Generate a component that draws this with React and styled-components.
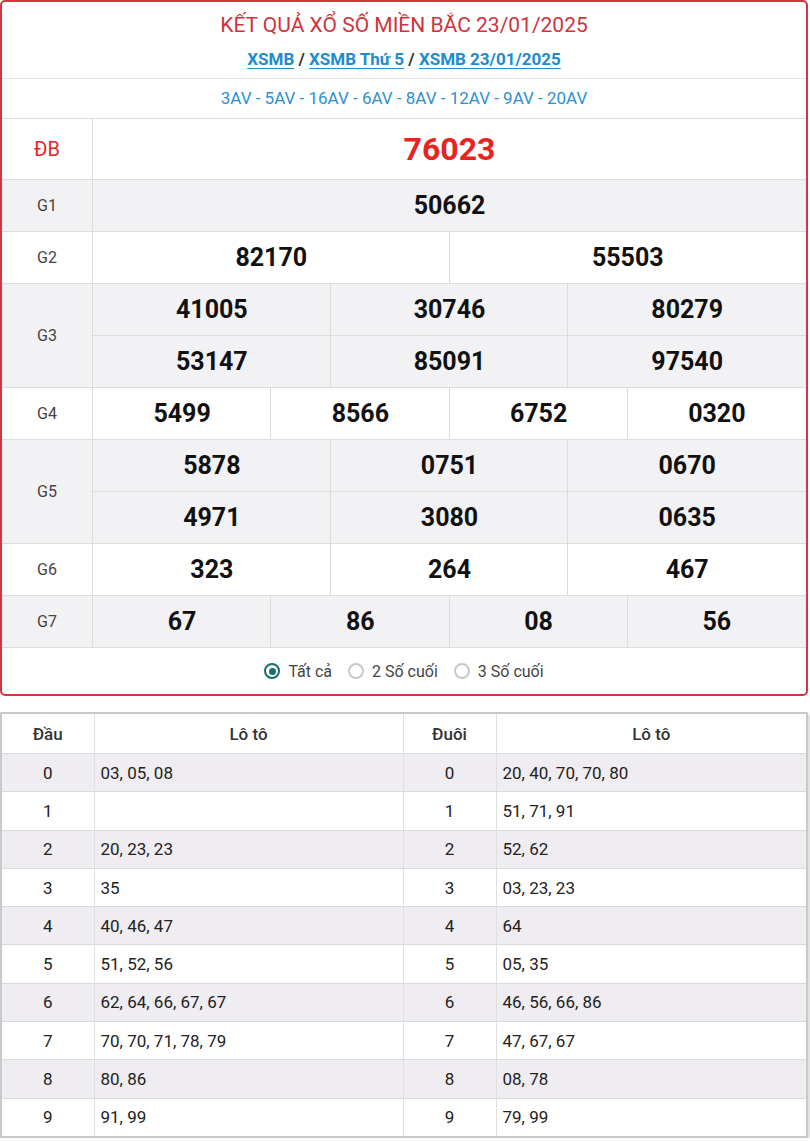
import React from "react";
import styled, { createGlobalStyle } from "styled-components";

const GlobalStyle = createGlobalStyle`
  body {
    margin: 0;
    background: #ffffff;
    font-family: Roboto, "Liberation Sans", sans-serif;
  }
`;

const Page = styled.div`
  width: 808px;
`;

const Card = styled.div`
  border: 2px solid #d7353d;
  border-radius: 5px;
  overflow: hidden;
  background: #fff;
`;

const Title = styled.h1`
  margin: 0;
  padding: 11px 0 12px;
  text-align: center;
  font-weight: 400;
  font-size: 21px;
  color: #d2323c;
`;

const Links = styled.div`
  text-align: center;
  font-size: 17px;
  font-weight: 700;
  color: #333;
  padding-bottom: 9px;
  border-bottom: 1px solid #e2e2e2;

  a {
    color: #1c8bd0;
    text-decoration: underline;
    text-underline-offset: 3px;
  }
`;

const Codes = styled.div`
  text-align: center;
  font-size: 17px;
  color: #2f8fcf;
  line-height: 39px;
  border-bottom: 1px solid #dcdcdc;
`;

const Row = styled.div`
  display: flex;
  background: ${(p) => (p.$shade ? "#f2f1f4" : "#fff")};
  border-bottom: 1px solid #dcdcdc;
`;

const Label = styled.div`
  width: 90px;
  flex: none;
  display: flex;
  align-items: center;
  justify-content: center;
  border-right: 1px solid #dcdcdc;
  font-size: ${(p) => (p.$special ? "20px" : "16px")};
  color: ${(p) => (p.$special ? "#e0282a" : "#444")};
`;

const Values = styled.div`
  flex: 1;
  display: grid;
  grid-template-columns: repeat(${(p) => p.$cols}, 1fr);
`;

const Num = styled.div`
  height: ${(p) => (p.$special ? "60px" : "51px")};
  display: flex;
  align-items: center;
  justify-content: center;
  font-weight: 700;
  font-size: ${(p) => (p.$special ? "32px" : "25px")};
  color: ${(p) => (p.$special ? "#e8241f" : "#111")};
  border-left: 1px solid #dcdcdc;
  border-top: ${(p) => (p.$top ? "1px solid #dcdcdc" : "none")};
  margin-left: -1px;
`;

const Filter = styled.div`
  display: flex;
  justify-content: center;
  align-items: center;
  gap: 16px;
  height: 46px;
  font-size: 16px;
  color: #444;
`;

const Option = styled.label`
  display: flex;
  align-items: center;
  gap: 8px;
`;

const Dot = styled.span`
  width: 16px;
  height: 16px;
  border-radius: 50%;
  box-sizing: border-box;
  border: 2px solid ${(p) => (p.$on ? "#13706d" : "#c8c8c8")};
  display: flex;
  align-items: center;
  justify-content: center;

  &::after {
    content: "";
    width: 7px;
    height: 7px;
    border-radius: 50%;
    background: ${(p) => (p.$on ? "#13706d" : "transparent")};
  }
`;

const LotoTable = styled.table`
  margin-top: 16px;
  width: 808px;
  border-collapse: collapse;
  table-layout: fixed;
  border: 2px solid #c9c9c9;
  box-shadow: 2px 3px 2px rgba(0, 0, 0, 0.15);
  font-size: 17px;
  color: #222;

  th {
    height: 39px;
    font-weight: 500;
    color: #333;
  }

  td, th {
    border-left: 1px solid #e0e0e0;
    border-bottom: 1px solid #dadada;
    padding: 0 6px;
  }

  td {
    height: 37.3px;
  }

  tbody tr:nth-child(odd) {
    background: #efedf1;
  }
`;

const Key = styled.td`
  text-align: center;
`;

const special = "76023";
const prizes = [
  { label: "G1", cols: 1, nums: ["50662"] },
  { label: "G2", cols: 2, nums: ["82170", "55503"] },
  { label: "G3", cols: 3, nums: ["41005", "30746", "80279", "53147", "85091", "97540"] },
  { label: "G4", cols: 4, nums: ["5499", "8566", "6752", "0320"] },
  { label: "G5", cols: 3, nums: ["5878", "0751", "0670", "4971", "3080", "0635"] },
  { label: "G6", cols: 3, nums: ["323", "264", "467"] },
  { label: "G7", cols: 4, nums: ["67", "86", "08", "56"] },
];

const heads = [
  "03, 05, 08", "", "20, 23, 23", "35", "40, 46, 47",
  "51, 52, 56", "62, 64, 66, 67, 67", "70, 70, 71, 78, 79", "80, 86", "91, 99",
];
const tails = [
  "20, 40, 70, 70, 80", "51, 71, 91", "52, 62", "03, 23, 23", "64",
  "05, 35", "46, 56, 66, 86", "47, 67, 67", "08, 78", "79, 99",
];

export default function App() {
  return (
    <Page>
      <GlobalStyle />
      <Card>
        <Title>KẾT QUẢ XỔ SỐ MIỀN BẮC 23/01/2025</Title>
        <Links>
          <a href="#">XSMB</a> / <a href="#">XSMB Thứ 5</a> / <a href="#">XSMB 23/01/2025</a>
        </Links>
        <Codes>3AV - 5AV - 16AV - 6AV - 8AV - 12AV - 9AV - 20AV</Codes>
        <Row>
          <Label $special>ĐB</Label>
          <Values $cols={1}>
            <Num $special>{special}</Num>
          </Values>
        </Row>
        {prizes.map((p, i) => (
          <Row key={p.label} $shade={i % 2 === 0}>
            <Label>{p.label}</Label>
            <Values $cols={p.cols}>
              {p.nums.map((n, j) => (
                <Num key={j} $top={j >= p.cols}>{n}</Num>
              ))}
            </Values>
          </Row>
        ))}
        <Filter>
          <Option><Dot $on />Tất cả</Option>
          <Option><Dot />2 Số cuối</Option>
          <Option><Dot />3 Số cuối</Option>
        </Filter>
      </Card>
      <LotoTable>
        <colgroup>
          <col style={{ width: 93 }} />
          <col style={{ width: 309 }} />
          <col style={{ width: 93 }} />
          <col />
        </colgroup>
        <thead>
          <tr>
            <th>Đầu</th>
            <th>Lô tô</th>
            <th>Đuôi</th>
            <th>Lô tô</th>
          </tr>
        </thead>
        <tbody>
          {heads.map((h, i) => (
            <tr key={i}>
              <Key>{i}</Key>
              <td>{h}</td>
              <Key>{i}</Key>
              <td>{tails[i]}</td>
            </tr>
          ))}
        </tbody>
      </LotoTable>
    </Page>
  );
}
